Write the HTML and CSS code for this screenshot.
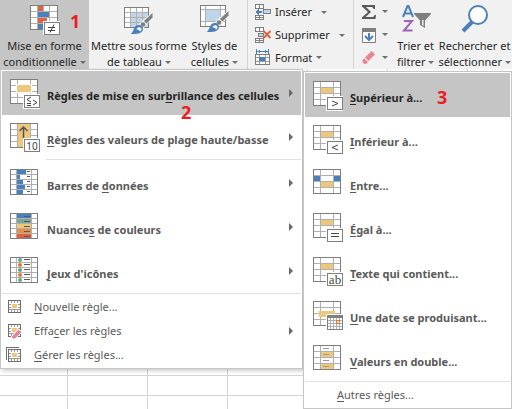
FILE: index.html
```html
<!DOCTYPE html>
<html lang="fr">
<head>
    <meta charset="UTF-8">
    <meta name="viewport" content="width=device-width, initial-scale=1.0">
    <title>Mise en forme conditionnelle</title>
    <link rel="stylesheet" href="styles.css">
</head>
<body>
    <!-- Shared icon parts -->
    <svg class="defs" width="0" height="0" aria-hidden="true">
        <symbol id="grid" viewBox="0 0 30 30">
            <rect x="0" y="0" width="28" height="25" fill="#7f7f7f"/>
            <rect x="1" y="1" width="26" height="23" fill="#fff"/>
            <path d="M7.500 1v23M20.500 1v23M1 6.500h26M1 12.500h26M1 18.500h26" stroke="#b0b0b0"/>
        </symbol>
        <symbol id="badge" viewBox="0 0 30 30">
            <rect x="13" y="15" width="17" height="15" fill="#fff"/>
            <rect x="14.500" y="16.500" width="15" height="12" fill="#fff" stroke="#7f7f7f"/>
        </symbol>
        <symbol id="small-grid" viewBox="0 0 16 16">
            <rect x="1.500" y="1.500" width="12" height="12" fill="#fff" stroke="#6f6f6f"/>
            <path d="M4.500 2v2M7.500 2v2M10.500 2v2M2 5.500h2M2 8.500h2M11 5.500h2M11 8.500h2M2 10.500h11M4.500 10v3M7.500 10v3M10.500 10v3" stroke="#9a9a9a"/>
            <rect x="5" y="5" width="5" height="4" fill="#ecc77c"/>
        </symbol>
        <symbol id="brush" viewBox="0 0 24 24">
            <path d="M23 0v6l-6 6-2 3-3 2-4-4 3-3 2-2z" fill="#f1f1f1"/>
            <path d="M22.500 1v4.500l-6 6-2.500-2.500z" fill="#7f7f7f"/>
            <circle cx="13" cy="12.500" r="2.300" fill="#7f7f7f"/>
            <path d="M8 13c2.500-.5 5.500 1.500 5 4.500-.6 3.500-5 5-12.500 4.500 3.500-1.500 2.500-8 7.500-9z" fill="#4a80bb"/>
            <path d="M6.500 17.500c.5-2 3-3 4.500-1.500 1 1 .5 2.500-1 3.500-.5-1.500-1.500-2-3.500-2z" fill="#fff"/>
        </symbol>
    </svg>

    <header class="ribbon">
        <section class="group styles-group">
            <button class="big-button active" type="button">
                <svg width="32" height="32" viewBox="0 0 32 32" shape-rendering="crispEdges">
                    <rect x="1" y="1" width="28" height="25" fill="#7f7f7f"/>
                    <rect x="2" y="2" width="26" height="23" fill="#fff"/>
                    <path d="M8.500 2v23M14.500 2v23M20.500 2v23M2 7.500h26M2 13.500h26M2 19.500h26" stroke="#b0b0b0"/>
                    <path d="M9 2h5v5H9zM9 14h9v5H9z" fill="#dc6442"/>
                    <path d="M9 8h11v5H9zM9 20h5v5H9z" fill="#4a80bb"/>
                    <rect x="14" y="17" width="17" height="14" fill="#fff"/>
                    <rect x="15.500" y="18.500" width="15" height="12" fill="#fff" stroke="#7f7f7f"/>
                    <path d="M19 23.500h7M19 26.500h7M25 20.500l-4 8" stroke="#444" shape-rendering="auto"/>
                </svg>
                <span>Mise en forme<br>conditionnelle <i class="caret"></i></span>
            </button>
            <button class="big-button" type="button">
                <svg width="32" height="32" viewBox="0 0 32 32">
                    <g shape-rendering="crispEdges">
                        <rect x="1" y="3" width="25" height="21" fill="#7f7f7f"/>
                        <rect x="2" y="4" width="23" height="19" fill="#fff"/>
                        <rect x="8" y="9" width="17" height="14" fill="#c0d4ea"/>
                        <path d="M7.500 4v19M13.500 4v19M19.500 4v19M2 8.500h23M2 13.500h23M2 18.500h23" stroke="#b0b0b0"/>
                    </g>
                    <use href="#brush" x="7" y="8" width="24" height="24"/>
                </svg>
                <span>Mettre sous forme<br>de tableau <i class="caret"></i></span>
            </button>
            <button class="big-button" type="button">
                <svg width="32" height="32" viewBox="0 0 32 32">
                    <g shape-rendering="crispEdges">
                        <rect x="2" y="1" width="26" height="22" fill="#7f7f7f"/>
                        <rect x="3" y="2" width="24" height="20" fill="#fff"/>
                        <path d="M7.500 2v20M22.500 2v20M3 5.500h24M3 17.500h24" stroke="#b0b0b0"/>
                        <rect x="8" y="6" width="14" height="11" fill="#c0d4ea"/>
                    </g>
                    <use href="#brush" x="8" y="6" width="24" height="24"/>
                </svg>
                <span>Styles de<br>cellules <i class="caret"></i></span>
            </button>
        </section>

        <section class="group cells-group">
            <button class="row-button" type="button">
                <svg width="16" height="17" viewBox="0 0 16 17" shape-rendering="crispEdges">
                    <path d="M.5.5h8v4h-8zM4.500.5v4M.5 11.500h8v4h-8zM4.500 11.500v4M.5 13.500h8" fill="#fff" stroke="#7f7f7f"/>
                    <path d="M8.500 5.500h7v4h-7z" fill="#c0d4ea" stroke="#7f7f7f"/>
                    <path d="M1 7h6v2H1zM2 6h2v4H2zM3 5h1v6H3z" fill="#4a80bb"/>
                </svg>
                Insérer <i class="caret spaced"></i>
            </button>
            <button class="row-button" type="button">
                <svg width="16" height="17" viewBox="0 0 16 17" shape-rendering="crispEdges">
                    <path d="M.5.5h8v4h-8zM4.500.5v4M.5 11.500h8v4h-8zM4.500 11.500v4M.5 13.500h8" fill="#fff" stroke="#7f7f7f"/>
                    <path d="M3.500 6.500h5v3h-5z" fill="#c0d4ea" stroke="#7f7f7f"/>
                    <path d="M8.500 4l7 7M15.500 4l-7 7" stroke="#dc6442" stroke-width="2" shape-rendering="auto"/>
                </svg>
                Supprimer <i class="caret spaced"></i>
            </button>
            <button class="row-button" type="button">
                <svg width="16" height="17" viewBox="0 0 16 17" shape-rendering="crispEdges">
                    <path d="M1.500 0v5M13.500 0v5M2 2.500h11M4.500 1v3M10.500 1v3" stroke="#4a80bb"/>
                    <path d="M.5 5.500h14v10H.5z" fill="#fff" stroke="#7f7f7f"/>
                    <path d="M4.500 6v9M10.500 6v9M1 8.500h13M1 12.500h13" stroke="#9a9a9a"/>
                    <path d="M4 8h6v4H4z" fill="#4a80bb"/>
                </svg>
                Format <i class="caret"></i>
            </button>
        </section>

        <section class="group edit-group">
            <div class="edit-tools">
                <button class="tool-button" type="button" aria-label="Somme automatique">
                    <svg width="16" height="16" viewBox="0 0 16 16">
                        <path d="M1 1h13v4h-1.500C12 3.500 11.500 3 10 3H5l5 5-5.500 5H11c1.500 0 2-.5 2.500-2H15l-.5 4H1v-1.500L7 8 1 2.500z" fill="#595959"/>
                    </svg>
                    <i class="caret"></i>
                </button>
                <button class="tool-button" type="button" aria-label="Remplissage">
                    <svg width="16" height="16" viewBox="0 0 16 16">
                        <path d="M1.500 1.500h13v14h-13z" fill="#fff" stroke="#7f7f7f"/>
                        <path d="M1 1h14v4H1z" fill="#7f7f7f"/>
                        <path d="M8 6v7M4 9l4 4 4-4" fill="none" stroke="#4a80bb" stroke-width="2"/>
                    </svg>
                    <i class="caret"></i>
                </button>
                <button class="tool-button" type="button" aria-label="Effacer">
                    <svg width="16" height="16" viewBox="0 0 16 16">
                        <path d="M10.500 1l3.500 3.500-6.500 6.500L4 7.500z" fill="#e98497"/>
                        <path d="M3.200 8.300l3.800 3.700L5 14H3.500L1.500 12v-2z" fill="#e98497"/>
                    </svg>
                    <i class="caret"></i>
                </button>
            </div>
            <button class="big-button" type="button">
                <svg width="32" height="32" viewBox="0 0 32 32">
                    <path d="M3 13L7.500 2h1L13 13M5 9.500h6" fill="none" stroke="#4a80bb" stroke-width="2"/>
                    <path d="M4 17h8l-8 9.500h8.500" fill="none" stroke="#9b62b8" stroke-width="2"/>
                    <path d="M14 9h17v1l-6 6.500V24l-5-3v-4.500L14 10z" fill="#7f7f7f"/>
                    <path d="M22 16v5l1.500 1v-6z" fill="#f1f1f1"/>
                </svg>
                <span>Trier et<br>filtrer <i class="caret"></i></span>
            </button>
            <button class="big-button" type="button">
                <svg width="32" height="32" viewBox="0 0 32 32">
                    <path d="M13 18L4 27" stroke="#4a80bb" stroke-width="4"/>
                    <circle cx="19" cy="11" r="9" fill="#fff" stroke="#4a80bb" stroke-width="2"/>
                </svg>
                <span>Rechercher et<br>sélectionner <i class="caret"></i></span>
            </button>
        </section>
        <strong class="step step-1">1</strong>
    </header>

    <main class="sheet">
        <div class="menus">
            <ul class="menu main-menu">
                <li>
                    <button class="item selected" type="button">
                        <svg width="30" height="30" viewBox="0 0 30 30" shape-rendering="crispEdges">
                            <use href="#grid"/>
                            <path d="M6 5h16v9H6z" fill="#fff"/>
                            <path d="M7 6h14v7H7z" fill="#ecc77c"/>
                            <use href="#badge"/>
                            <path d="M21 18l-4 2.500 4 2.500M17 24.500h4M17 26.500h4M23 21l4 2.500-4 2.500" fill="none" stroke="#444" shape-rendering="auto"/>
                        </svg>
                        <span>Règles de mise en sur<u>b</u>rillance des cellules</span>
                        <i class="arrow"></i>
                    </button>
                </li>
                <li>
                    <button class="item" type="button">
                        <svg width="30" height="30" viewBox="0 0 30 30" shape-rendering="crispEdges">
                            <use href="#grid"/>
                            <path d="M8 1h12v23H8z" fill="#ecc77c"/>
                            <path d="M13.500 4v11M9.500 8l4-4 4 4" fill="none" stroke="#555" stroke-width="1.500" shape-rendering="auto"/>
                            <use href="#badge"/>
                            <text x="22" y="27" class="badge-text">10</text>
                        </svg>
                        <span><u>R</u>ègles des valeurs de plage haute/basse</span>
                        <i class="arrow"></i>
                    </button>
                </li>
                <li class="separator indented"></li>
                <li>
                    <button class="item" type="button">
                        <svg width="30" height="30" viewBox="0 0 30 30" shape-rendering="crispEdges">
                            <path d="M.5.500h27v25H.5z" fill="#fff" stroke="#7f7f7f"/>
                            <path d="M6.500 1v24M21.500 1v24M1 5.500h26M1 10.500h26M1 15.500h26M1 20.500h26" stroke="#b0b0b0"/>
                            <path d="M7 1h9v4H7zM7 6h3v4H7zM7 11h6v4H7zM7 16h8v4H7zM7 21h6v4H7z" fill="#4a80bb"/>
                            <path d="M17 2.500h3M17 7.500h3M17 12.500h3M17 17.500h3M17 22.500h3" stroke="#595959"/>
                        </svg>
                        <span>Barres de <u>d</u>onnées</span>
                        <i class="arrow"></i>
                    </button>
                </li>
                <li>
                    <button class="item" type="button">
                        <svg width="30" height="30" viewBox="0 0 30 30" shape-rendering="crispEdges">
                            <path d="M.5.500h27v25H.5z" fill="#fff" stroke="#7f7f7f"/>
                            <path d="M6.500 1v24M21.500 1v24M1 5.500h26M1 10.500h26M1 15.500h26M1 20.500h26" stroke="#b0b0b0"/>
                            <path d="M7 1h14v4H7z" fill="#4a80bb"/>
                            <path d="M7 6h14v4H7z" fill="#76a797"/>
                            <path d="M7 11h14v4H7z" fill="#ecc77c"/>
                            <path d="M7 16h14v4H7z" fill="#ec8e3e"/>
                            <path d="M7 21h14v4H7z" fill="#dc6442"/>
                            <path d="M14 3.500h6M14 8.500h6M14 13.500h6M14 18.500h6M14 23.500h6" stroke="#595959"/>
                        </svg>
                        <span>Nuance<u>s</u> de couleurs</span>
                        <i class="arrow"></i>
                    </button>
                </li>
                <li>
                    <button class="item" type="button">
                        <svg width="30" height="30" viewBox="0 0 30 30" shape-rendering="crispEdges">
                            <path d="M.5.500h27v25H.5z" fill="#fff" stroke="#7f7f7f"/>
                            <path d="M6.500 1v24M21.500 1v24M1 5.500h26M1 10.500h26M1 15.500h26M1 20.500h26" stroke="#b0b0b0"/>
                            <g shape-rendering="auto">
                                <path d="M8 3a2 2 0 0 1 4 0 2 2 0 0 1-4 0zM8 13a2 2 0 0 1 4 0 2 2 0 0 1-4 0zM8 23a2 2 0 0 1 4 0 2 2 0 0 1-4 0z" fill="#62a58b"/>
                                <path d="M8 8a2 2 0 0 1 4 0 2 2 0 0 1-4 0zM8 18a2 2 0 0 1 4 0 2 2 0 0 1-4 0z" fill="#e3762b"/>
                            </g>
                            <path d="M14 2.500h6M14 7.500h6M14 12.500h6M14 17.500h6M14 22.500h6" stroke="#595959"/>
                        </svg>
                        <span><u>J</u>eux d'icônes</span>
                        <i class="arrow"></i>
                    </button>
                </li>
                <li class="separator"></li>
                <li>
                    <button class="item small" type="button">
                        <svg width="16" height="16" viewBox="0 0 16 16" shape-rendering="crispEdges"><use href="#small-grid" x="1" width="16" height="16"/></svg>
                        <span><u>N</u>ouvelle règle...</span>
                    </button>
                </li>
                <li>
                    <button class="item small" type="button">
                        <svg width="16" height="16" viewBox="0 0 16 16">
                            <use href="#small-grid" x="1" width="16" height="16" shape-rendering="crispEdges"/>
                            <path d="M12.500 6l3.500 3-7 7H7l-2-2z" fill="#e98497" stroke="#fff"/>
                        </svg>
                        <span>Effa<u>c</u>er les règles</span>
                        <i class="arrow"></i>
                    </button>
                </li>
                <li>
                    <button class="item small" type="button">
                        <svg width="16" height="16" viewBox="0 0 16 16" shape-rendering="crispEdges">
                            <path d="M.5 13V.5H13" fill="none" stroke="#6f6f6f"/>
                            <use href="#small-grid" x="1" y="1" width="16" height="16"/>
                        </svg>
                        <span><u>G</u>érer les règles...</span>
                    </button>
                </li>
            </ul>

            <ul class="menu sub-menu">
                <li>
                    <button class="item selected" type="button">
                        <svg width="30" height="30" viewBox="0 0 30 30" shape-rendering="crispEdges">
                            <use href="#grid"/>
                            <path d="M8 7h12v5H8z" fill="#ecc77c"/>
                            <use href="#badge"/>
                            <path d="M19 20l6 2.500-6 2.500" fill="none" stroke="#444" shape-rendering="auto"/>
                        </svg>
                        <span><u>S</u>upérieur à...</span>
                    </button>
                </li>
                <li>
                    <button class="item" type="button">
                        <svg width="30" height="30" viewBox="0 0 30 30" shape-rendering="crispEdges">
                            <use href="#grid"/>
                            <path d="M8 7h12v5H8z" fill="#ecc77c"/>
                            <use href="#badge"/>
                            <path d="M25 20l-6 2.500 6 2.500" fill="none" stroke="#444" shape-rendering="auto"/>
                        </svg>
                        <span><u>I</u>nférieur à...</span>
                    </button>
                </li>
                <li>
                    <button class="item" type="button">
                        <svg width="30" height="30" viewBox="0 0 30 30" shape-rendering="crispEdges">
                            <use href="#grid"/>
                            <path d="M1 7h6v5H1zM21 7h6v5h-6z" fill="#4a80bb"/>
                            <path d="M8 13h12v5H8z" fill="#ecc77c"/>
                        </svg>
                        <span><u>E</u>ntre...</span>
                    </button>
                </li>
                <li>
                    <button class="item" type="button">
                        <svg width="30" height="30" viewBox="0 0 30 30" shape-rendering="crispEdges">
                            <use href="#grid"/>
                            <path d="M8 7h12v5H8z" fill="#ecc77c"/>
                            <use href="#badge"/>
                            <path d="M18 20.500h8M18 23.500h8" stroke="#444"/>
                        </svg>
                        <span><u>É</u>gal à...</span>
                    </button>
                </li>
                <li>
                    <button class="item" type="button">
                        <svg width="30" height="30" viewBox="0 0 30 30" shape-rendering="crispEdges">
                            <use href="#grid"/>
                            <path d="M8 7h12v5H8z" fill="#ecc77c"/>
                            <use href="#badge"/>
                            <text x="22" y="27" class="badge-text serif">ab</text>
                        </svg>
                        <span><u>T</u>exte qui contient...</span>
                    </button>
                </li>
                <li>
                    <button class="item" type="button">
                        <svg width="30" height="30" viewBox="0 0 30 30" shape-rendering="crispEdges">
                            <use href="#grid"/>
                            <path d="M6 10h16v6H6z" fill="#ecc77c"/>
                            <path d="M13 13h17v17H13z" fill="#fff"/>
                            <path d="M14.500 14.500h15v14h-15z" fill="#fff" stroke="#7f7f7f"/>
                            <path d="M14 14h16v3H14z" fill="#7f7f7f"/>
                            <path d="M17.500 17v11M20.500 17v11M23.500 17v11M26.500 17v11M15 19.500h14M15 22.500h14M15 25.500h14" stroke="#b0b0b0"/>
                            <path d="M23.500 19.500h3v3h-3z" fill="#fff" stroke="#e3762b"/>
                        </svg>
                        <span><u>U</u>ne date se produisant...</span>
                    </button>
                </li>
                <li>
                    <button class="item" type="button">
                        <svg width="30" height="30" viewBox="0 0 30 30" shape-rendering="crispEdges">
                            <use href="#grid"/>
                            <path d="M8 7h12v5H8zM8 19h12v5H8z" fill="#ecc77c"/>
                            <path d="M10 3.500h6M10 9.500h6M10 15.500h6M10 21.500h6" stroke="#999"/>
                        </svg>
                        <span><u>V</u>aleurs en double...</span>
                    </button>
                </li>
                <li class="separator"></li>
                <li>
                    <button class="item small no-icon" type="button"><span><u>A</u>utres règles...</span></button>
                </li>
            </ul>
            <strong class="step step-2">2</strong>
            <strong class="step step-3">3</strong>
        </div>
    </main>
</body>
</html>
```
FILE: styles.css
```css
:root {
    --ribbon-bg: #f1f1f1;
    --selected-bg: #c5c5c5;
    --border: #c6c6c6;
    --line: #e1e1e1;
    --text: #5a5a5a;
    --text-dark: #262626;
    --step: #ed1c24;
}

* {
    margin: 0;
    padding: 0;
    box-sizing: border-box;
}

body {
    font-family: "Noto Sans", "Open Sans", sans-serif;
    font-size: 11px;
    line-height: 16px;
    color: var(--text-dark);
    min-height: 100vh;
    display: flex;
    flex-direction: column;
}

button {
    font: inherit;
    color: inherit;
    background: none;
    border: none;
    cursor: pointer;
}

svg {
    display: block;
    flex: none;
}

.defs {
    position: absolute;
}

/* Ribbon */
.ribbon {
    position: relative;
    display: flex;
    height: 69px;
    background: var(--ribbon-bg);
}

.group {
    display: flex;
    flex: none;
}

.group + .group {
    border-left: 1px solid #d2d2d2;
}

.styles-group {
    width: 247px;
}

.big-button {
    display: flex;
    flex-direction: column;
    align-items: center;
    gap: 2px;
    padding: 4px 2px 0;
    text-align: center;
    white-space: nowrap;
}

.big-button.active {
    width: 89px;
    background: var(--selected-bg);
}

.caret {
    display: inline-block;
    vertical-align: 2px;
    border: 3px solid transparent;
    border-top-color: #6f6f6f;
    border-bottom: none;
}

.caret.spaced {
    margin-left: 5px;
}

.cells-group {
    width: 106px;
    flex-direction: column;
    padding: 1px 0 0 7px;
}

.row-button {
    display: flex;
    align-items: center;
    gap: 4px;
    height: 23px;
    white-space: nowrap;
}

.edit-group {
    flex: 1;
}

.edit-tools {
    display: flex;
    flex-direction: column;
    padding: 0 7px;
}

.tool-button {
    display: flex;
    align-items: center;
    gap: 5px;
    height: 23px;
}

/* Sheet behind the menus */
.sheet {
    position: relative;
    flex: 1;
    min-height: 340px;
    background-color: #fff;
    background-image:
        linear-gradient(to right, transparent 79px, #d4d4d4 79px),
        linear-gradient(to bottom, transparent 19px, #d4d4d4 19px);
    background-size: 80px 100%, 100% 20px;
    background-position: -12px 0, 0 7px;
}

/* Menus */
.menus {
    position: absolute;
    top: 0;
    left: 0;
    right: 0;
    display: flex;
    align-items: flex-start;
}

.menu {
    list-style: none;
    padding: 1px;
    background: #fff;
    border: 1px solid var(--border);
    box-shadow: 2px 2px 4px rgba(0, 0, 0, 0.2);
}

.main-menu {
    width: 303px;
}

.sub-menu {
    position: relative;
    flex: 1;
    margin-top: 2px;
}

.item {
    display: flex;
    align-items: center;
    width: 100%;
    height: 44px;
    padding: 0 8px;
    gap: 7px;
    color: var(--text);
    font-weight: 700;
    text-align: left;
    white-space: nowrap;
}

.item span {
    flex: 1;
    padding-top: 6px;
}

.item svg {
    margin-top: 2px;
}

.item u {
    text-underline-offset: 2px;
}

.item.selected {
    background: var(--selected-bg);
    color: var(--text-dark);
}

.arrow {
    border: 4px solid transparent;
    border-left-color: #6a6a6a;
    border-right: none;
}

.item.small {
    height: 24px;
    padding: 0 8px 0 4px;
    gap: 12px;
    font-weight: 400;
}

.item.small span {
    padding-top: 0;
}

.item.small svg {
    margin-top: 0;
}

.item.no-icon {
    padding-left: 32px;
}

.separator {
    height: 1px;
    margin-bottom: 1px;
    background: var(--line);
}

.separator.indented {
    margin-left: 44px;
}

.badge-text {
    font-family: "Noto Sans", sans-serif;
    font-size: 10px;
    font-weight: 400;
    fill: #444;
    text-anchor: middle;
}

.badge-text.serif {
    font-family: "Liberation Serif", serif;
    font-size: 13px;
}

/* Step numbers */
.step {
    position: absolute;
    font-size: 18px;
    line-height: 20px;
    color: var(--step);
}

.step-1 {
    left: 70px;
    top: 11px;
}

.step-2 {
    left: 181px;
    top: 33px;
}

.step-3 {
    left: 437px;
    top: 18px;
}
```
